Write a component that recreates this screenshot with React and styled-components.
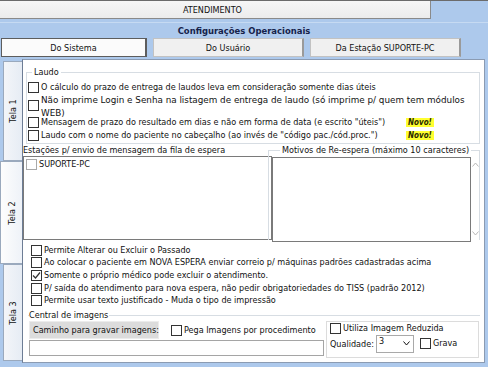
import styled, { createGlobalStyle } from 'styled-components';

const Global = createGlobalStyle`
  html, body {
    margin: 0;
    padding: 0;
    background: #adc9ec;
    font-family: 'DejaVu Sans Condensed', 'Liberation Sans', Arial, sans-serif;
    font-size: 9px;
    color: #111;
  }
`;

const Screen = styled.div`
  width: 488px;
  height: 367px;
  overflow: hidden;
  background: #adc9ec;
  display: flex;
  flex-direction: column;
`;

const TitleBar = styled.div`
  height: 18px;
  display: flex;
  border-top: 1px solid #6b6b6b;
  .box {
    width: 431px;
    background: linear-gradient(#f6f6f6, #ececec);
    border-right: 1px solid #8a8a8a;
    border-bottom: 1px solid #8a8a8a;
    display: flex;
    align-items: center;
    justify-content: flex-end;
    padding-right: 188px;
    box-sizing: border-box;
  }
`;

const Heading = styled.div`
  margin-top: 3px;
  height: 15px;
  border-top: 1px solid #c6daf2;
  display: flex;
  align-items: center;
  justify-content: center;
  font-weight: 700;
  font-size: 9.4px;
  color: #15224a;
`;

const Tabs = styled.div`
  display: flex;
  gap: 6px;
  padding-left: 1px;
  height: 19px;
`;

const Tab = styled.div`
  width: ${(p) => p.$w}px;
  box-sizing: border-box;
  background: ${(p) => (p.$active ? '#fbfbfb' : '#f0f0f0')};
  border: 1px solid ${(p) => (p.$active ? '#5d5d5d' : '#c2c2c2')};
  border-right: 2px solid ${(p) => (p.$active ? '#5d5d5d' : '#9a9a9a')};
  display: flex;
  align-items: center;
  justify-content: center;
`;

const Body = styled.div`
  display: flex;
  margin-top: 2px;
  height: 304px;
  padding-right: 3px;
`;

const SideTabs = styled.div`
  width: 22px;
  display: flex;
  flex-direction: column;
  padding-top: 2px;
`;

const SideTab = styled.div`
  height: ${(p) => p.$h}px;
  margin-left: ${(p) => (p.$active ? 0 : 3)}px;
  box-sizing: border-box;
  background: ${(p) => (p.$active ? 'linear-gradient(90deg, #fdfdfd, #eef2f8)' : 'linear-gradient(90deg, #f3f5f9, #e6ecf4)')};
  border: 1px solid #9aa9bd;
  border-right: none;
  display: flex;
  align-items: center;
  justify-content: center;
  span {
    transform: rotate(-90deg);
    white-space: nowrap;
  }
`;

const Panel = styled.div`
  flex: 1;
  background: #fff;
  border: 1px solid #8b9bb2;
  border-left: 1px solid #6d7d95;
  box-sizing: border-box;
  display: flex;
  flex-direction: column;
  padding: 7px 4px 0 3px;
`;

const Group = styled.fieldset`
  margin: 0;
  padding: 3px 0 1px 1px;
  border: 1px solid #d7dde3;
  min-width: 0;
  legend {
    padding: 0 2px;
    margin-left: 4px;
    line-height: 11px;
  }
`;

const CheckRow = styled.div`
  display: flex;
  align-items: center;
  gap: 2px;
  height: ${(p) => p.$h || 12}px;
  line-height: 11px;
  white-space: nowrap;
`;

const Box = styled.span`
  width: 11px;
  height: 11px;
  flex: none;
  box-sizing: border-box;
  border: 1px solid ${(p) => (p.$light ? '#a9a9a9' : '#333')};
  background: #fff;
  display: flex;
  align-items: center;
  justify-content: center;
`;

const Label = styled.span`
  width: ${(p) => p.$w}px;
  flex: none;
`;

const Odd = styled.span`
  font-family: 'DejaVu Sans', Verdana, sans-serif;
  font-size: 8.8px;
  line-height: 13px;
  white-space: normal;
  width: 424px;
  margin-top: 4px;
`;

const Novo = styled.span`
  background: #ffff30;
  font-style: italic;
  font-weight: 700;
  color: #2a2a00;
  font-size: 8px;
  line-height: 9px;
  padding: 0 2px;
`;

const ListRow = styled.div`
  display: flex;
  gap: 0;
  margin-top: 1px;
  margin-left: -3px;
  height: 95px;
`;

const ListCol = styled.div`
  width: 249px;
  display: flex;
  flex-direction: column;
  .label {
    line-height: 11px;
    height: 11px;
    white-space: nowrap;
  }
`;

const ListBox = styled.div`
  flex: 1;
  border: 1px solid #7a7a7a;
  padding: 2px 2px;
`;

const Motivos = styled.fieldset`
  flex: 1;
  margin: 0 0 0 -4px;
  padding: 0 0 0 3px;
  border: 1px solid #d7dde3;
  border-bottom: none;
  display: flex;
  min-width: 0;
  legend {
    padding: 0 2px;
    margin-left: 8px;
    line-height: 11px;
  }
`;

const TextArea = styled.div`
  width: 197px;
  border: 1px solid #7a7a7a;
  margin-top: 1px;
  height: 83px;
`;

const Scroll = styled.div`
  flex: 1;
  display: flex;
  flex-direction: column;
  justify-content: space-between;
  align-items: center;
  padding: 6px 0 4px;
  color: #b8b8b8;
  height: 74px;
`;

const Options = styled.div`
  margin-top: 4px;
  padding-left: 5px;
  display: flex;
  flex-direction: column;
`;

const Central = styled.fieldset`
  margin: 3px 0 0 2px;
  padding: 0 0 0 1px;
  border: none;
  border-top: 1px solid #d7dde3;
  min-width: 0;
  legend {
    padding: 0 1px 0 0;
    margin-left: 0;
    line-height: 11px;
  }
`;

const CentralGrid = styled.div`
  display: flex;
  gap: 2px;
`;

const PathCol = styled.div`
  width: 295px;
  display: flex;
  flex-direction: column;
  .top {
    display: flex;
    align-items: center;
    gap: 12px;
    height: 19px;
  }
`;

const PathLabel = styled.div`
  width: 130px;
  height: 18px;
  box-sizing: border-box;
  background: #dcdcdc;
  border: 1px solid #ececec;
  display: flex;
  align-items: center;
  padding-left: 3px;
  white-space: nowrap;
`;

const Input = styled.div`
  height: 16px;
  box-sizing: border-box;
  border: 1px solid #a5a5a5;
  background: #fff;
`;

const Reduced = styled.div`
  flex: 1;
  border: 1px solid #dcdcdc;
  margin-right: 1px;
  height: 33px;
  padding: 1px 3px;
  display: flex;
  flex-direction: column;
  .q {
    display: flex;
    align-items: center;
    gap: 2px;
  }
`;

const Select = styled.div`
  width: 38px;
  height: 18px;
  box-sizing: border-box;
  border: 1px solid #a9a9a9;
  display: flex;
  justify-content: space-between;
  padding: 0 3px 0 2px;
  line-height: 11px;
  margin-right: 4px;
  svg {
    margin-top: 5px;
  }
`;

const Check = ({ checked, light }) => (
  <Box $light={light}>
    {checked && (
      <svg width="9" height="9" viewBox="0 0 9 9">
        <path d="M1 4.5 L3.5 7 L8 1.5" fill="none" stroke="#333" strokeWidth="1.2" />
      </svg>
    )}
  </Box>
);

const Chevron = ({ up }) => (
  <svg width="7" height="5" viewBox="0 0 7 5">
    <path d={up ? 'M0.5 4.5 L3.5 1 L6.5 4.5' : 'M0.5 0.5 L3.5 4 L6.5 0.5'} fill="none" stroke="currentColor" />
  </svg>
);

const options = [
  { text: 'Permite Alterar ou Excluir o Passado' },
  { text: 'Ao colocar o paciente em NOVA ESPERA enviar correio p/ máquinas padrões cadastradas acima' },
  { text: 'Somente o próprio médico pode excluir o atendimento.', checked: true },
  { text: 'P/ saída do atendimento para nova espera, não pedir obrigatoriedades do TISS (padrão 2012)' },
  { text: 'Permite usar texto justificado - Muda o tipo de impressão' },
];

export default function App() {
  return (
    <Screen>
      <Global />
      <TitleBar>
        <div className="box">ATENDIMENTO</div>
      </TitleBar>
      <Heading>Configurações Operacionais</Heading>
      <Tabs>
        <Tab $w={146} $active>Do Sistema</Tab>
        <Tab $w={151}>Do Usuário</Tab>
        <Tab $w={151}>Da Estação SUPORTE-PC</Tab>
      </Tabs>
      <Body>
        <SideTabs>
          <SideTab $h={100}><span>Tela 1</span></SideTab>
          <SideTab $h={103} $active><span>Tela 2</span></SideTab>
          <SideTab $h={97}><span>Tela 3</span></SideTab>
        </SideTabs>
        <Panel>
          <Group>
            <legend>Laudo</legend>
            <CheckRow $h={13}>
              <Check />
              O cálculo do prazo de entrega de laudos leva em consideração somente dias úteis
            </CheckRow>
            <CheckRow $h={22}>
              <Check />
              <Odd>Não imprime Login e Senha na listagem de entrega de laudo (só imprime p/ quem tem módulos WEB)</Odd>
            </CheckRow>
            <CheckRow $h={13}>
              <Check />
              <Label $w={363}>Mensagem de prazo do resultado em dias e não em forma de data (e escrito "úteis")</Label>
              <Novo>Novo!</Novo>
            </CheckRow>
            <CheckRow $h={13}>
              <Check />
              <Label $w={363}>Laudo com o nome do paciente no cabeçalho (ao invés de "código pac./cód.proc.")</Label>
              <Novo>Novo!</Novo>
            </CheckRow>
          </Group>
          <ListRow>
            <ListCol>
              <div className="label">Estações p/ envio de mensagem da fila de espera</div>
              <ListBox>
                <CheckRow $h={11}>
                  <Check light />
                  SUPORTE-PC
                </CheckRow>
              </ListBox>
            </ListCol>
            <Motivos>
              <legend>Motivos de Re-espera (máximo 10 caracteres)</legend>
              <TextArea />
              <Scroll>
                <Chevron up />
                <Chevron />
              </Scroll>
            </Motivos>
          </ListRow>
          <Options>
            {options.map((o) => (
              <CheckRow key={o.text} $h={12.6}>
                <Check checked={o.checked} />
                {o.text}
              </CheckRow>
            ))}
          </Options>
          <Central>
            <legend>Central de imagens</legend>
            <CentralGrid>
              <PathCol>
                <div className="top">
                  <PathLabel>Caminho para gravar imagens:</PathLabel>
                  <CheckRow>
                    <Check />
                    Pega Imagens por procedimento
                  </CheckRow>
                </div>
                <Input />
              </PathCol>
              <Reduced>
                <CheckRow>
                  <Check />
                  Utiliza Imagem Reduzida
                </CheckRow>
                <div className="q">
                  Qualidade:
                  <Select>
                    3
                    <Chevron />
                  </Select>
                  <CheckRow>
                    <Check />
                    Grava
                  </CheckRow>
                </div>
              </Reduced>
            </CentralGrid>
          </Central>
        </Panel>
      </Body>
    </Screen>
  );
}
